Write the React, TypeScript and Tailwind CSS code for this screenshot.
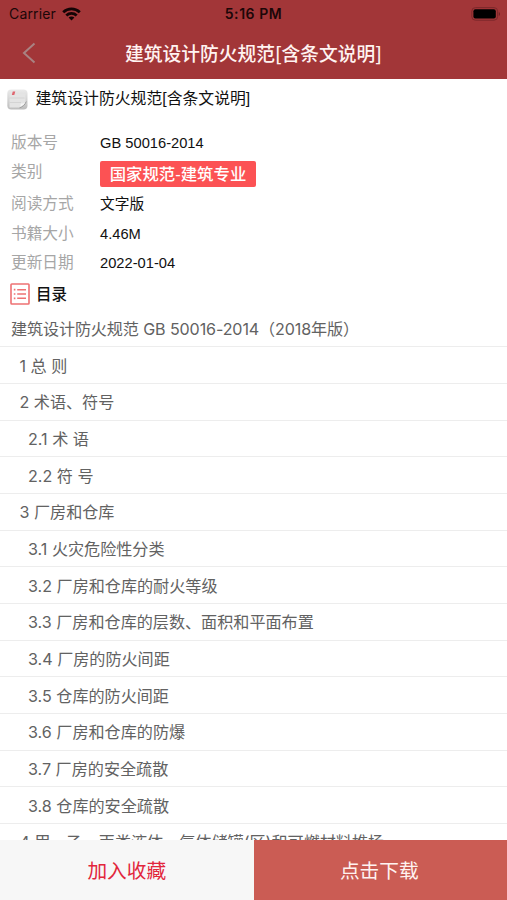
import { useState } from "react";

interface Chapter {
  title: string;
  level: number;
}

const chapters: Chapter[] = [
  { title: "建筑设计防火规范 GB 50016-2014（2018年版）", level: 0 },
  { title: "1 总 则", level: 1 },
  { title: "2 术语、符号", level: 1 },
  { title: "2.1 术 语", level: 2 },
  { title: "2.2 符 号", level: 2 },
  { title: "3 厂房和仓库", level: 1 },
  { title: "3.1 火灾危险性分类", level: 2 },
  { title: "3.2 厂房和仓库的耐火等级", level: 2 },
  { title: "3.3 厂房和仓库的层数、面积和平面布置", level: 2 },
  { title: "3.4 厂房的防火间距", level: 2 },
  { title: "3.5 仓库的防火间距", level: 2 },
  { title: "3.6 厂房和仓库的防爆", level: 2 },
  { title: "3.7 厂房的安全疏散", level: 2 },
  { title: "3.8 仓库的安全疏散", level: 2 },
  { title: "4 甲、乙、丙类液体、气体储罐(区)和可燃材料堆场", level: 1 },
];

const indents = ["pl-[11px] tracking-[-0.12px]", "pl-[19.5px]", "pl-[28px]"];

const details = [
  { label: "版本号", value: "GB 50016-2014" },
  { label: "类别", value: "国家规范-建筑专业", tag: true },
  { label: "阅读方式", value: "文字版" },
  { label: "书籍大小", value: "4.46M" },
  { label: "更新日期", value: "2022-01-04" },
];

function StatusBar() {
  return (
    <div className="grid h-[27px] grid-cols-3 items-center pl-[9px] pr-[6px] font-['Inter','Noto_Sans_CJK_SC',sans-serif] text-[14px] text-[#1c0708]">
      <div className="flex items-center gap-[6px]">
        <span className="tracking-[0.15px]">Carrier</span>
        <svg width="19" height="14" viewBox="0 0 19 14" fill="none" stroke="#140405" strokeWidth="2.8">
          <path d="M1.2 5.2C6 .7 13 .7 17.8 5.2" />
          <path d="M4.3 8.5C7.3 5.7 11.7 5.7 14.7 8.5" />
          <path d="M9.5 13.4 6.6 10.5C8.2 9 10.8 9 12.4 10.5Z" fill="#140405" stroke="none" />
        </svg>
      </div>
      <span className="-ml-[3px] text-center font-semibold tracking-[0.55px]">5:16 PM</span>
      <svg className="justify-self-end" width="30" height="14" viewBox="0 0 30 14">
        <rect x=".8" y=".6" width="25.8" height="12.6" rx="3.6" fill="none" stroke="#7c282b" />
        <rect x="2.4" y="2.2" width="22.4" height="9.4" rx="2" fill="#000" />
        <path d="M27.8 5v4c1.600-.6 1.600-3.400 0-4Z" fill="#6d2225" />
      </svg>
    </div>
  );
}

function BookIcon() {
  return (
    <svg width="21" height="21" viewBox="0 0 21 21">
      <defs>
        <linearGradient id="cover" x1="0" y1="0" x2="0" y2="1">
          <stop offset="0" stopColor="#ebebeb" />
          <stop offset="1" stopColor="#bdbdbd" />
        </linearGradient>
      </defs>
      <rect x=".3" y=".5" width="20.2" height="20" rx="4" fill="url(#cover)" />
      <path d="M2.500 4.500H18.500V13L13 18.500H2.500Z" fill="#e4e4e4" />
      <path d="M2.500 13.500H14M2.500 9h15" stroke="#cfcfcf" strokeWidth=".8" />
      <path d="M12.500 18.500c1-1 1.200-2.500 1.300-4 2 .3 4-.5 5.500-2.500-.8 2.800-3.500 5.500-6.800 6.500Z" fill="#f6f6f6" />
      <path d="M12.500 18.800c3-.8 5.600-3.200 6.800-6.300" stroke="#9d9d9d" strokeWidth="1" fill="none" />
      <path d="M4.800 6 5.800 2.600h2.500L7.300 6Z" fill="#df6670" />
    </svg>
  );
}

function CatalogIcon() {
  return (
    <svg width="20" height="22" viewBox="0 0 20 22" fill="none" stroke="#ee7173">
      <rect x="1" y="1" width="18" height="20" rx=".8" strokeWidth="1.600" />
      <path d="M7.200 6.700H16M7.200 11H16M7.200 15.300H16" strokeWidth="1.400" />
      <path d="M3.800 6.700h1.600M3.800 11h1.600M3.800 15.300h1.600" strokeWidth="1.700" />
    </svg>
  );
}

export default function App() {
  const [favorite, setFavorite] = useState(false);

  return (
    <div className="flex h-[900px] w-[507px] flex-col overflow-hidden bg-white font-['Liberation_Sans','Noto_Sans_CJK_SC',sans-serif]">
      <header className="h-[79px] shrink-0 bg-[#a23638]">
        <StatusBar />
        <div className="grid h-[52px] grid-cols-[60px_1fr_60px] items-center">
          <button className="pl-[22px]">
            <svg width="14" height="22" viewBox="0 0 14 22" fill="none" stroke="#a98282" strokeWidth="2">
              <path d="M12.500 1.500 2 11l10.500 9.500" />
            </svg>
          </button>
          <h1 className="whitespace-nowrap text-center font-['Noto_Sans_CJK_SC',sans-serif] text-[18.750px] font-medium text-[#fff3f1]">
            建筑设计防火规范[含条文说明]
          </h1>
        </div>
      </header>

      <main className="flex min-h-0 flex-1 flex-col overflow-hidden">
        <div className="flex h-[40px] shrink-0 items-center gap-[7.500px] pl-[7px] pt-px">
          <BookIcon />
          <h2 className="-mt-[2px] text-[15.850px] text-[#111]">建筑设计防火规范[含条文说明]</h2>
        </div>

        <dl className="flex shrink-0 flex-col pt-[9px]">
          {details.map((item) => (
            <div
              key={item.label}
              className={`flex items-center pl-[11px] ${item.tag ? "h-[32px]" : "h-[29.500px]"}`}
            >
              <dt className={`w-[89px] text-[15.700px] text-[#a6a6a6] ${item.tag ? "pb-[3px]" : ""}`}>
                {item.label}
              </dt>
              {item.tag ? (
                <dd className="flex h-[26px] w-[156px] items-center justify-center rounded-[2px] bg-[#fc5254] pt-px text-[16.400px] font-medium text-white">
                  {item.value}
                </dd>
              ) : (
                <dd className="text-[14.700px] text-[#111]">{item.value}</dd>
              )}
            </div>
          ))}
        </dl>

        <div className="flex h-[32.500px] shrink-0 items-center gap-[6px] pl-[10px]">
          <CatalogIcon />
          <h3 className="pt-px text-[15.500px] font-medium text-[#111]">目录</h3>
        </div>

        <ul className="pt-[0.300px] font-['Inter','Noto_Sans_CJK_SC',sans-serif] text-[16.100px] text-[#626262]">
          {chapters.map((chapter) => (
            <li
              key={chapter.title}
              className={`flex h-[36.670px] items-center whitespace-nowrap border-b border-[#ededed] pt-px ${indents[chapter.level]}`}
            >
              {chapter.title}
            </li>
          ))}
        </ul>
      </main>

      <footer className="grid h-[60px] shrink-0 grid-cols-2 font-['Noto_Sans_CJK_SC',sans-serif] text-[19.700px]">
        <button className="bg-[#f7f7f7] text-[#e2263c]" onClick={() => setFavorite(!favorite)}>
          {favorite ? "取消收藏" : "加入收藏"}
        </button>
        <button className="bg-[#cb5c54] pr-[2px] text-[#fff3f1]">点击下载</button>
      </footer>
    </div>
  );
}
